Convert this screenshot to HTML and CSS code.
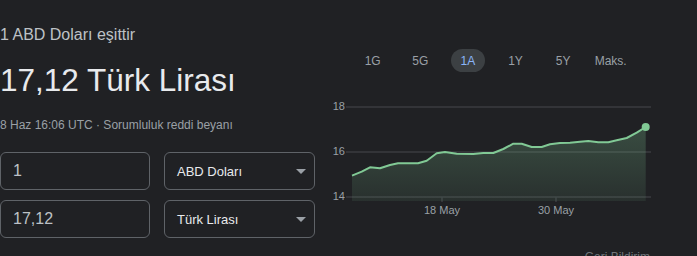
FILE: index.html
```html
<!DOCTYPE html>
<html lang="tr">
<head>
<meta charset="utf-8">
<title>Döviz çevirici</title>
<link rel="stylesheet" href="styles.css">
</head>
<body>
<div class="card">
  <section class="left">
    <div class="eq">1 ABD Doları eşittir</div>
    <div class="result">17,12 Türk Lirası</div>
    <div class="meta">8 Haz 16:06 UTC · Sorumluluk reddi beyanı</div>
    <div class="row">
      <div class="field">1</div>
      <div class="select"><span>ABD Doları</span><i class="caret"></i></div>
    </div>
    <div class="row">
      <div class="field">17,12</div>
      <div class="select"><span>Türk Lirası</span><i class="caret"></i></div>
    </div>
  </section>
  <section class="right">
    <nav class="tabs">
      <span class="tab">1G</span>
      <span class="tab">5G</span>
      <span class="tab active">1A</span>
      <span class="tab">1Y</span>
      <span class="tab">5Y</span>
      <span class="tab">Maks.</span>
    </nav>
    <svg class="chart" width="377" height="130" viewBox="0 0 377 130">
      <defs>
        <linearGradient id="fillg" x1="0" y1="0" x2="0" y2="1">
          <stop offset="0" stop-color="#81c995" stop-opacity="0.26"/>
          <stop offset="1" stop-color="#81c995" stop-opacity="0.09"/>
        </linearGradient>
      </defs>
      <g class="grid">
        <line x1="26" y1="17" x2="331" y2="17"/>
        <line x1="26" y1="62" x2="331" y2="62"/>
        <line x1="26" y1="107" x2="331" y2="107"/>
        <line x1="122" y1="107" x2="122" y2="112"/>
        <line x1="236" y1="107" x2="236" y2="112"/>
      </g>
      <g class="ylab">
        <text x="25" y="20">18</text>
        <text x="25" y="65">16</text>
        <text x="25" y="110">14</text>
      </g>
      <g class="xlab">
        <text x="122" y="124">18 May</text>
        <text x="236" y="124">30 May</text>
      </g>
      <path fill="url(#fillg)" d="M32,85.7 L41.7,81.7 L50,77.3 L60,78.3 L70,75 L78,73.3 L98,73.3 L106.7,70.7 L116.7,63.3 L125,62 L136.7,63.7 L153.3,64 L163.3,63 L173.3,63 L183.3,59 L193.3,53.7 L201.7,53.7 L211.7,57 L221.7,57 L230,54.3 L240,53 L250,52.7 L260,51.7 L268.3,51 L278.3,52.3 L288.3,52.3 L296.7,50.3 L306.7,48 L316.7,42.7 L325.7,37 L325.7,111 L32,111 Z"/>
      <path class="line" d="M32,85.7 L41.7,81.7 L50,77.3 L60,78.3 L70,75 L78,73.3 L98,73.3 L106.7,70.7 L116.7,63.3 L125,62 L136.7,63.7 L153.3,64 L163.3,63 L173.3,63 L183.3,59 L193.3,53.7 L201.7,53.7 L211.7,57 L221.7,57 L230,54.3 L240,53 L250,52.7 L260,51.7 L268.3,51 L278.3,52.3 L288.3,52.3 L296.7,50.3 L306.7,48 L316.7,42.7 L325.7,37"/>
      <circle cx="325.7" cy="37" r="4" fill="#81c995"/>
    </svg>
    <div class="feedback">Geri Bildirim</div>
  </section>
</div>
</body>
</html>
```

FILE: styles.css
```css
html, body {
  margin: 0;
  padding: 0;
  background: #202124;
  height: 100%;
  overflow: hidden;
}
body {
  font-family: "Liberation Sans", Arial, sans-serif;
  color: #bdc1c6;
}
.card {
  display: flex;
}
.left {
  width: 320px;
  padding-top: 25px;
}
.eq {
  font-size: 16px;
  line-height: 20px;
  color: #bdc1c6;
}
.result {
  margin-top: 15px;
  font-size: 31.5px;
  line-height: 40px;
  color: #e8eaed;
}
.meta {
  margin-top: 17px;
  font-size: 12px;
  line-height: 16px;
  color: #9aa0a6;
}
.row {
  display: flex;
  gap: 14px;
  margin-top: 10px;
}
.meta + .row {
  margin-top: 19px;
}
.field, .select {
  box-sizing: border-box;
  height: 38px;
  border: 1px solid #5f6368;
  border-radius: 6px;
  display: flex;
  align-items: center;
}
.field {
  width: 150px;
  padding-left: 12px;
  font-size: 16px;
  color: #bdc1c6;
}
.select {
  width: 151px;
  padding: 0 8px 0 12px;
  justify-content: space-between;
  font-size: 13px;
  color: #e8eaed;
}
.caret {
  width: 0;
  height: 0;
  border-left: 5px solid transparent;
  border-right: 5px solid transparent;
  border-top: 5px solid #9aa0a6;
}
.right {
  width: 377px;
  padding-top: 49px;
  display: flex;
  flex-direction: column;
}
.tabs {
  display: flex;
  gap: 13.6px;
  padding-left: 35.7px;
  height: 23px;
}
.tab {
  width: 34px;
  height: 23px;
  border-radius: 12px;
  display: flex;
  align-items: center;
  justify-content: center;
  font-size: 12px;
  color: #9aa0a6;
}
.tab.active {
  background: #3c4043;
  color: #8ab4f8;
}
.chart {
  display: block;
  margin-top: 18px;
}
.grid line {
  stroke: #3a3b3f;
  stroke-width: 1.5;
}
.ylab text {
  font-family: "Liberation Sans", Arial, sans-serif;
  font-size: 11px;
  fill: #9aa0a6;
  text-anchor: end;
}
.xlab text {
  font-family: "Liberation Sans", Arial, sans-serif;
  font-size: 11px;
  fill: #9aa0a6;
  text-anchor: middle;
}
.line {
  fill: none;
  stroke: #81c995;
  stroke-width: 2;
  stroke-linejoin: round;
}
.feedback {
  margin-top: 29px;
  padding-right: 47px;
  text-align: right;
  font-size: 12px;
  line-height: 16px;
  color: #70757a;
}
```
